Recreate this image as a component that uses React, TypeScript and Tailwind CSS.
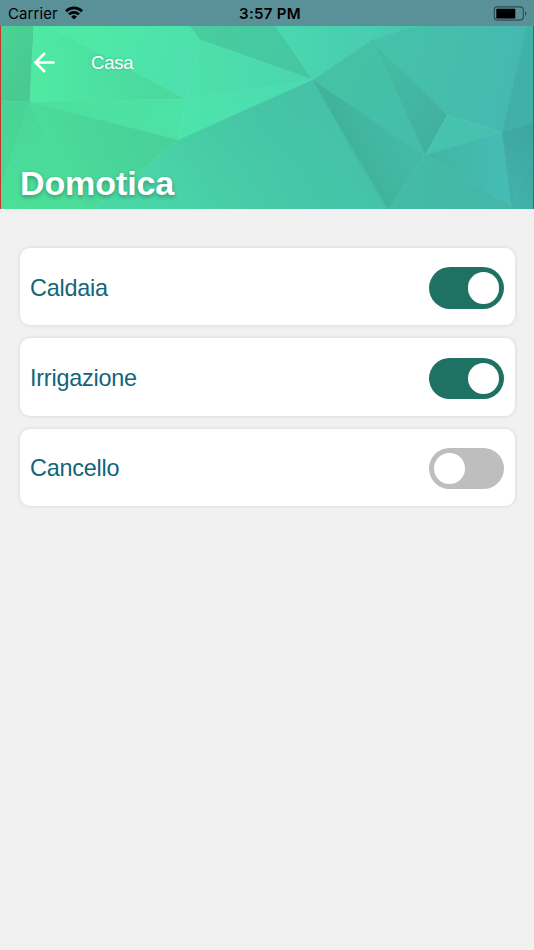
import { useState } from "react";

interface Device {
  name: string;
  active: boolean;
}

interface IDeviceCard {
  device: Device;
  onToggle: () => void;
}

interface Facet {
  points: string;
  from: string;
  to: string;
  line: [number, number, number, number]; // gradient direction
}

// Low poly header background
const facets: Facet[] = [
  { points: "0,0 33,0 29,76 0,75", from: "#49d193", to: "#48ca92", line: [0, 20, 33, 40] },
  { points: "33,0 48,0 186,73 29,76", from: "#4ee9a3", to: "#4bd9a0", line: [40, 60, 150, 50] },
  { points: "48,0 190,0 200,14 186,73", from: "#4eeaa5", to: "#4ddfae", line: [90, 0, 190, 40] },
  { points: "190,0 276,0 313,54 200,14", from: "#48cd9d", to: "#46c7a2", line: [200, 0, 290, 40] },
  { points: "200,14 313,54 186,73", from: "#4de1aa", to: "#4ad6b0", line: [186, 50, 300, 54] },
  { points: "29,76 186,73 178,114", from: "#4ce09c", to: "#4de2a6", line: [40, 76, 180, 95] },
  { points: "186,73 313,54 178,114", from: "#4de4ab", to: "#4adab0", line: [180, 95, 313, 54] },
  { points: "0,75 29,76 0,164", from: "#49d395", to: "#49d896", line: [20, 76, 0, 164] },
  { points: "29,76 0,164 0,183 83,183 54,128", from: "#4ad79a", to: "#4bdf98", line: [40, 80, 20, 183] },
  { points: "29,76 178,114 92,183 83,183 54,128", from: "#4bdb99", to: "#48d19a", line: [60, 150, 150, 110] },
  { points: "178,114 313,54 388,183 92,183", from: "#45c39f", to: "#4ad9a6", line: [290, 64, 190, 183] },
  { points: "276,0 366,0 372,14 313,54", from: "#4ad7af", to: "#48ccb0", line: [285, 20, 372, 14] },
  { points: "366,0 415,0 372,14", from: "#48cfb1", to: "#46c6b0", line: [366, 0, 415, 0] },
  { points: "415,0 527,0 503,106 448,89 372,14", from: "#45c2aa", to: "#45b9b0", line: [390, 20, 515, 50] },
  { points: "313,54 372,14 426,129", from: "#45c2a4", to: "#44beaa", line: [330, 50, 410, 100] },
  { points: "372,14 448,89 426,129", from: "#43bca4", to: "#41b19f", line: [380, 50, 445, 95] },
  { points: "313,54 426,129 390,183 384,183", from: "#40b29b", to: "#43baa5", line: [355, 130, 395, 110] },
  { points: "448,89 503,106 426,129", from: "#46c4ae", to: "#46c0b2", line: [435, 115, 503, 106] },
  { points: "426,129 503,106 512,180", from: "#41b6a4", to: "#45bcb4", line: [430, 125, 505, 120] },
  { points: "426,129 512,180 510,183 390,183", from: "#43bba6", to: "#43b6a9", line: [410, 160, 510, 180] },
  { points: "527,0 534,0 534,97 503,106", from: "#41b2a8", to: "#40afa6", line: [510, 50, 534, 60] },
  { points: "503,106 534,97 534,130 512,180", from: "#42b0a8", to: "#3da69f", line: [505, 150, 534, 105] },
  { points: "534,130 534,183 510,183 512,180", from: "#41b2a9", to: "#3faaa3", line: [512, 175, 534, 150] },
];

function HeaderBackground() {
  return (
    <svg className="absolute inset-0 h-full w-full" viewBox="0 0 534 183" preserveAspectRatio="none">
      <defs>
        {facets.map(({ from, to, line }, index) => (
          <linearGradient
            key={index}
            id={`facet-${index}`}
            gradientUnits="userSpaceOnUse"
            x1={line[0]}
            y1={line[1]}
            x2={line[2]}
            y2={line[3]}
          >
            <stop offset="0" stopColor={from} />
            <stop offset="1" stopColor={to} />
          </linearGradient>
        ))}
        <linearGradient id="right-shade">
          <stop offset="0" stopColor="#45c2ac" stopOpacity="0" />
          <stop offset="1" stopColor="#45c2ac" stopOpacity="0.85" />
        </linearGradient>
      </defs>
      {facets.map(({ points }, index) => (
        <polygon
          key={index}
          points={points}
          fill={`url(#facet-${index})`}
          stroke={`url(#facet-${index})`}
          strokeWidth="0.6"
        />
      ))}
      <polygon points="178,114 313,54 388,183 92,183" fill="url(#right-shade)" />
    </svg>
  );
}

function StatusBar() {
  return (
    <div className="grid h-[26px] grid-cols-3 items-center bg-[#5a9098] pr-[7px] pl-2 font-[Inter,sans-serif] text-black">
      <div className="flex items-center gap-[7px]">
        <span className="pt-[2px] text-[15px] leading-6 tracking-[0.1px]">Carrier</span>
        <svg width="18" height="14" viewBox="0 0 18 14" fill="none" stroke="currentColor" strokeWidth="2.6">
          <path d="M1 5.2a11.4 11.4 0 0 1 16 0" />
          <path d="M4 8.4a7.1 7.1 0 0 1 10 0" />
          <path d="M9 13.6L6.1 10.7a4.1 4.1 0 0 1 5.8 0z" fill="currentColor" stroke="none" />
        </svg>
      </div>
      <span className="pt-[2px] pl-[5px] text-center text-[15px] leading-6 font-semibold tracking-[0.3px]">
        3:57 PM
      </span>
      <svg className="justify-self-end" width="34" height="15" viewBox="0 0 34 15">
        <rect x="1.3" y="0.9" width="29" height="13.2" rx="3" fill="none" stroke="#2f4c50" strokeWidth="1.1" />
        <rect x="3.3" y="2.8" width="19" height="9.6" rx="0.6" />
        <path d="M32 5.2c1.7.7 1.7 3.9 0 4.6z" fill="#2f4c50" />
      </svg>
    </div>
  );
}

function DeviceCard({ device, onToggle }: IDeviceCard) {
  return (
    <div className="flex h-[77.4px] items-center justify-between rounded-[10px] bg-white pr-[10.5px] pl-[10px] shadow-[0_0_4px_rgba(0,0,0,0.12)]">
      <span className="pt-[3px] text-[23.4px] tracking-[-0.22px] text-[#11657a]">{device.name}</span>
      <button
        role="switch"
        aria-checked={device.active}
        aria-label={device.name}
        onClick={onToggle}
        className={`mt-[2.6px] flex h-[41.4px] w-[75px] items-center rounded-full px-[5px] ${
          device.active ? "justify-end bg-[#1f7163]" : "justify-start bg-[#bebebe]"
        }`}
      >
        <span className="h-[31.4px] w-[31.4px] rounded-full bg-white" />
      </button>
    </div>
  );
}

export default function App() {
  const [devices, setDevices] = useState<Device[]>([
    { name: "Caldaia", active: true },
    { name: "Irrigazione", active: true },
    { name: "Cancello", active: false },
  ]);

  const toggleDevice = (index: number) => {
    setDevices(devices.map((device, i) => (i === index ? { ...device, active: !device.active } : device)));
  };

  return (
    <div className="min-h-screen bg-[#f1f1f1] font-['Liberation_Sans',sans-serif]">
      <StatusBar />
      <header className="relative h-[183px] overflow-hidden border-x border-[#c5362b]">
        <HeaderBackground />
        <div className="relative flex h-full flex-col justify-between pt-[24px] pb-[5px] pl-[19px] text-white">
          <div className="flex h-6 items-center">
            <svg className="ml-[13px]" width="23" height="24" viewBox="0 0 23 24" fill="none" stroke="currentColor" strokeWidth="2.5">
              <path d="M21.5 12.5H3M12 3L2.5 12.5L12 22" />
            </svg>
            <span className="ml-[35px] pt-[2px] text-[18.5px] tracking-[-0.2px] [text-shadow:0_0_3px_rgba(0,0,0,0.2)]">
              Casa
            </span>
          </div>
          <h1 className="text-[34px] leading-[42px] font-bold tracking-[-0.1px] [text-shadow:0_2px_4px_rgba(0,0,0,0.3)]">
            Domotica
          </h1>
        </div>
      </header>
      <main className="flex flex-col gap-[13px] pt-[39px] pr-[19.5px] pl-5">
        {devices.map((device, index) => (
          <DeviceCard key={device.name} device={device} onToggle={() => toggleDevice(index)} />
        ))}
      </main>
    </div>
  );
}
